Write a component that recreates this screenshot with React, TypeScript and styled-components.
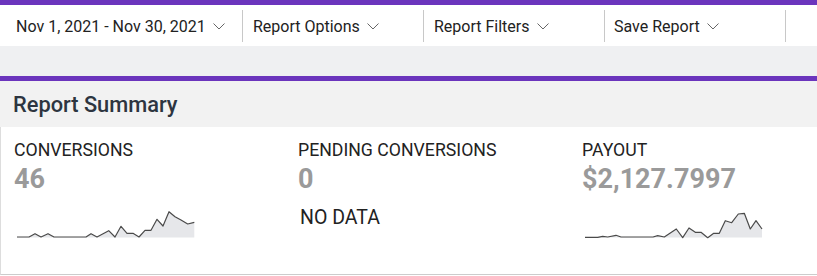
import * as React from 'react';
import styled, { createGlobalStyle } from 'styled-components';

const GlobalStyle = createGlobalStyle`
  body {
    margin: 0;
    background: #FFF;
    font-family: Roboto, "Liberation Sans", Arial, sans-serif;
    color: #222;
  }
`;

const Page = styled.div`
  width: 817px;
`;

const Toolbar = styled.div`
  display: flex;
  height: 41px;
  border-top: 5px solid #6B35BD;
  background-color: #FFF;
`;

const ToolbarItem = styled.div<{ $width: number; $pad: number }>`
  display: flex;
  align-items: center;
  gap: 7px;
  box-sizing: border-box;
  width: ${p => p.$width}px;
  height: 32px;
  margin-top: 5px;
  padding-left: ${p => p.$pad}px;
  border-right: 1px solid #C8C8C8;
  font-size: 16px;
  color: #222;
  white-space: nowrap;
`;

const Band = styled.div`
  height: 30px;
  background-color: #EFF0F2;
`;

const Panel = styled.div`
  border-top: 5px solid #6B35BD;
`;

const PanelHeader = styled.div`
  height: 46px;
  display: flex;
  align-items: center;
  padding: 1px 0 0 13px;
  box-sizing: border-box;
  background-color: #F2F2F2;
  font-size: 21.8px;
  font-weight: 500;
  color: #2D3540;
`;

const PanelBody = styled.div`
  display: grid;
  grid-template-columns: 284px 284px 1fr;
  height: 148px;
  box-sizing: border-box;
  padding: 13px 0 0 13px;
  border-left: 1px solid #DDD;
  border-bottom: 1px solid #CCC;
`;

const Stat = styled.div`
  display: flex;
  flex-direction: column;
`;

const Label = styled.div`
  font-size: 17.7px;
  line-height: 20px;
  color: #222;
`;

const Value = styled.div`
  margin-top: 4px;
  font-size: 27px;
  line-height: 30px;
  font-weight: 700;
  color: #9A9A9A;
`;

const NoData = styled.div`
  margin: 13px 0 0 2px;
  font-size: 19.5px;
  line-height: 22px;
  color: #222;
`;

const Spark = styled.svg`
  display: block;
  margin: 14px 0 0 3px;
`;

const Chevron = () => (
  <svg width="12" height="7" viewBox="0 0 12 7">
    <path d="M0.5 0.5 L6 6 L11.5 0.5" fill="none" stroke="#666" strokeWidth="1" />
  </svg>
);

const conversionsLine: [number, number][] = [
  [0, 29], [12, 29], [18, 25.7], [24, 29], [31, 25.7], [37, 29], [69, 29],
  [74, 25.7], [80, 29], [91.7, 22.7], [98, 29], [104, 18.3], [110, 25.3],
  [116, 25.3], [122, 29], [128, 22.3], [134, 22.3], [140, 11.3], [146, 18],
  [152, 3.7], [158, 8.7], [164, 12], [170.7, 16], [177.3, 14.3],
];

const payoutLine: [number, number][] = [
  [0, 29.3], [12.7, 29.3], [17.7, 28.3], [22.7, 29], [31, 27.3], [36, 29],
  [68, 29], [72.7, 27.7], [79.3, 29], [91.3, 21], [97.7, 29.7], [104, 20],
  [110.3, 24.3], [116, 24.3], [122.7, 29.7], [128.7, 25.3], [134.3, 25.3],
  [140.3, 12.7], [146.7, 14.7], [153.3, 6], [159.3, 5.3], [165.3, 21],
  [171, 12.7], [177, 21],
];

const Sparkline = ({ points }: { points: [number, number][] }) => {
  const line = points.map(([x, y], i) => `${i ? 'L' : 'M'}${x} ${y}`).join(' ');
  const last = points[points.length - 1];
  const area = `${line} L${last[0]} 29.5 L0 29.5 Z`;

  return (
    <Spark width="180" height="32" viewBox="0 0 180 32">
      <path d={area} fill="#E6E7EA" />
      <path d={line} fill="none" stroke="#4A4A4A" strokeWidth="1.2" strokeLinejoin="round" />
    </Spark>
  );
};

const App = () => (
  <Page>
    <GlobalStyle />
    <Toolbar>
      <ToolbarItem $width={243} $pad={16}>Nov 1, 2021 - Nov 30, 2021 <Chevron /></ToolbarItem>
      <ToolbarItem $width={181} $pad={10}>Report Options <Chevron /></ToolbarItem>
      <ToolbarItem $width={181} $pad={10}>Report Filters <Chevron /></ToolbarItem>
      <ToolbarItem $width={181} $pad={9}>Save Report <Chevron /></ToolbarItem>
    </Toolbar>
    <Band />
    <Panel>
      <PanelHeader>Report Summary</PanelHeader>
      <PanelBody>
        <Stat>
          <Label>CONVERSIONS</Label>
          <Value>46</Value>
          <Sparkline points={conversionsLine} />
        </Stat>
        <Stat>
          <Label>PENDING CONVERSIONS</Label>
          <Value>0</Value>
          <NoData>NO DATA</NoData>
        </Stat>
        <Stat>
          <Label>PAYOUT</Label>
          <Value>$2,127.7997</Value>
          <Sparkline points={payoutLine} />
        </Stat>
      </PanelBody>
    </Panel>
  </Page>
);

export default App;
